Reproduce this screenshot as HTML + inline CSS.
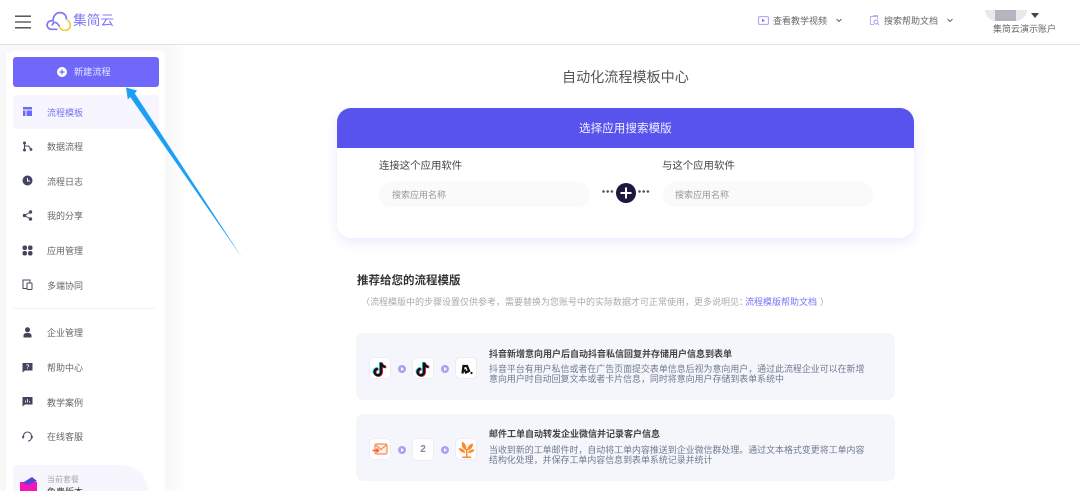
<!DOCTYPE html>
<html lang="zh">
<head>
<meta charset="utf-8">
<title>集简云</title>
<style>
*{box-sizing:border-box;margin:0;padding:0}
html,body{width:1080px;height:491px;overflow:hidden;background:#fff}
body{position:relative;font-family:"Liberation Sans","Noto Sans CJK SC",sans-serif;color:#555}
#wrap{position:absolute;left:0;top:0;width:1080px;height:491px;overflow:hidden;background:#fff;filter:blur(.3px)}
.a{position:absolute;white-space:nowrap}
#hd{left:0;top:0;width:1080px;height:45px;background:#fff;border-bottom:1px solid #e2e2e2}
#bgl{left:0;top:45px;width:6px;height:446px;background:#f8f8f8}
#bgr{left:165px;top:45px;width:22px;height:446px;background:linear-gradient(90deg,#f7f7f7,#fff)}
#bgt{left:0;top:45px;width:165px;height:8px;background:#f9f9f9}
#side{left:6px;top:51px;width:159px;height:440px;background:#fff;border-radius:9px 9px 0 0}
#new{left:13px;top:57px;width:146px;height:30px;background:#7068fb;border-radius:3px}
#act{left:13px;top:95px;width:146px;height:34px;background:#f7f6ff;border-radius:3px}
.m{left:47px;font-size:9px;line-height:12px;color:#66666e}
.i{left:22px;width:11px;height:11px;overflow:visible}
#card{left:337px;top:108px;width:577px;height:130px;background:#fff;border-radius:14px;box-shadow:0 4px 12px rgba(95,85,240,.13)}
#chead{left:337px;top:108px;width:577px;height:40px;background:#5953ed;border-radius:14px 14px 0 0}
.inp{top:182px;width:211px;height:25px;border-radius:13px;background:#fafafa;font-size:9px;line-height:26px;padding-left:13px;color:#999}
.lab{top:160px;font-size:10.400px;line-height:14px;color:#444}
.dots{top:190px;width:12px;height:3px;background:radial-gradient(circle at 1.500px 1.500px,#555 1.200px,transparent 1.400px) 0 0/4.200px 3px repeat-x}
.tc{left:356px;width:539px;height:67px;background:#f5f6fb;border-radius:7px}
.tt{left:489px;font-size:9px;font-weight:bold;line-height:12px;color:#444}
.td{left:489px;font-size:8.950px;line-height:10.200px;color:#6f7b90}
.box{width:22px;height:22px;background:#fff;border:1px solid #eceef3;border-radius:5px}
.box svg{display:block;width:20px;height:20px}
.pl{width:8px;height:8px;border-radius:50%;background:#a8a2f4}
.pl:after{content:"";position:absolute;left:3px;top:2px;border-left:3px solid #fff;border-top:2px solid transparent;border-bottom:2px solid transparent}
</style>
</head>
<body>
<div id="wrap">
<div class="a" id="hd"></div>
<div class="a" id="bgl"></div>
<div class="a" id="bgr"></div>
<div class="a" id="bgt"></div>
<div class="a" id="side"></div>

<svg class="a" style="left:15px;top:15px" width="17" height="14"><path d="M0 1.200H16M0 7H16M0 12.800H16" stroke="#444" stroke-width="1.300"/></svg>
<svg class="a" style="left:45px;top:11px" width="28" height="20" viewBox="0 0 28 20" fill="none"><path d="M22 9A5.500 5.500 0 1 1 14.500 15.500" stroke="#f5cd3a" stroke-width="1.700"/><path d="M12.500 18.300H6.500A4.300 4.300 0 1 1 8 10C8 5 11 1.600 15 1.600C19 1.600 21.500 4.500 21.500 8.500M7 14.500C9 9.500 12 11 14.500 15.500" stroke="#7f78f5" stroke-width="1.700"/></svg>
<div class="a" style="left:73px;top:11px;font-size:13.700px;line-height:20px;color:#7e78f7">集简云</div>

<svg class="a" style="left:758px;top:16px" width="11" height="9" viewBox="0 0 11 9" fill="none"><rect x=".6" y=".6" width="9.800" height="7.800" rx="1" stroke="#a59ff5" stroke-width="1"/><path d="M4 2.800V6.200L7 4.500Z" fill="#7f78f5"/></svg>
<div class="a" style="left:773px;top:15px;font-size:9px;line-height:12px;color:#666">查看教学视频</div>
<svg class="a" style="left:836px;top:18px" width="6" height="5" fill="none"><path d="M.5 1L3 3.500L5.500 1" stroke="#666"/></svg>
<svg class="a" style="left:869px;top:15px" width="11" height="11" viewBox="0 0 11 11" fill="none"><path d="M8 1.500H1.500V9.500H5" stroke="#b3aef6"/><path d="M4 .6H8.500V4" stroke="#b3aef6"/><circle cx="7" cy="7" r="2" stroke="#a59ff5"/><path d="M8.500 8.500L10 10" stroke="#a59ff5"/></svg>
<div class="a" style="left:884px;top:15px;font-size:9px;line-height:12px;color:#666">搜索帮助文档</div>
<svg class="a" style="left:947px;top:18px" width="6" height="5" fill="none"><path d="M.5 1L3 3.500L5.500 1" stroke="#666"/></svg>
<div class="a" style="left:985px;top:10px;width:42px;height:11px;background:#e9e9e9;border-radius:0 0 14px 14px"></div>
<div class="a" style="left:995px;top:10px;width:21px;height:11px;background:#b5b5c0"></div>
<div class="a" style="left:1031px;top:13px;width:0;height:0;border-left:4px solid transparent;border-right:4px solid transparent;border-top:5px solid #444"></div>
<div class="a" style="left:993px;top:23px;font-size:9px;line-height:12px;color:#666">集简云演示账户</div>

<div class="a" id="new"></div>
<svg class="a" style="left:57px;top:67px" width="10" height="10"><circle cx="5" cy="5" r="5" fill="#fff"/><path d="M2.500 5H7.500M5 2.500V7.500" stroke="#7068fb" stroke-width="1.200"/></svg>
<div class="a" style="left:74px;top:66px;font-size:9.200px;line-height:12px;color:#e6e4ff">新建流程</div>
<div class="a" id="act"></div>

<svg class="a i" style="top:106px" viewBox="0 0 11 11"><path d="M1 1H10V3.500H1ZM1 4.500H3.500V10H1ZM4.500 4.500H10V10H4.500Z" fill="#7068fb"/></svg>
<div class="a m" style="top:107px;color:#7a72f5">流程模板</div>
<svg class="a i" style="top:141px" viewBox="0 0 11 11" fill="none"><path d="M2.500 2V8.500M2.500 5H6.500L8.500 7.500" stroke="#4a4a5e" stroke-width="1.100"/><circle cx="2.500" cy="2" r="1.500" fill="#4a4a5e"/><circle cx="2.500" cy="9" r="1.500" fill="#4a4a5e"/><circle cx="9" cy="8.500" r="1.400" fill="#4a4a5e"/></svg>
<div class="a m" style="top:141px">数据流程</div>
<svg class="a i" style="top:175px" viewBox="0 0 11 11"><circle cx="5.500" cy="5.500" r="5" fill="#44446a"/><path d="M5.500 3V6H8" stroke="#fff" fill="none"/></svg>
<div class="a m" style="top:176px">流程日志</div>
<svg class="a i" style="top:210px" viewBox="0 0 11 11" fill="none"><path d="M8.500 2L2.500 5.500L8.500 9" stroke="#4a4a5e"/><circle cx="8.500" cy="2" r="1.700" fill="#4a4a5e"/><circle cx="2.500" cy="5.500" r="1.700" fill="#4a4a5e"/><circle cx="8.500" cy="9" r="1.700" fill="#4a4a5e"/></svg>
<div class="a m" style="top:210px">我的分享</div>
<svg class="a i" style="top:245px" viewBox="0 0 11 11" fill="#44445e"><rect x=".5" y=".5" width="4.500" height="4.500" rx="2"/><rect x="6" y=".5" width="4.500" height="4.500" rx="2"/><rect x=".5" y="6" width="4.500" height="4.500" rx="2"/><rect x="6" y="6" width="4.500" height="4.500" rx="2"/></svg>
<div class="a m" style="top:245px">应用管理</div>
<svg class="a i" style="top:279px" viewBox="0 0 11 11" fill="none" stroke="#4a4a5e"><path d="M5 9.500H1V1H8V3.500"/><rect x="5" y="4" width="5" height="6.500" rx=".6"/></svg>
<div class="a m" style="top:280px">多端协同</div>
<div class="a" style="left:13px;top:308px;width:142px;height:1px;background:#f1f1f4"></div>
<svg class="a i" style="top:327px" viewBox="0 0 11 11" fill="#44445e"><circle cx="5.500" cy="2.800" r="2.500"/><path d="M1.500 10.500V8.500C1.500 7 3 6 5 6H6C8 6 9.500 7 9.500 8.500V10.500Z"/></svg>
<div class="a m" style="top:327px">企业管理</div>
<svg class="a i" style="top:362px" viewBox="0 0 11 11"><path d="M.5 1H10.500V8.500H3L.5 10.500Z" fill="#44445e"/><path d="M4.200 3.300C4.500 2.400 6.800 2.500 6.800 3.800C6.800 4.700 5.500 4.700 5.500 5.600M5.500 6.300V7" stroke="#fff" fill="none" stroke-width=".8"/></svg>
<div class="a m" style="top:362px">帮助中心</div>
<svg class="a i" style="top:396px" viewBox="0 0 11 11"><path d="M.5 1H10.500V8.500H3L.5 10.500Z" fill="#44445e"/><path d="M3.500 4.500V6.500M5.500 3V6.500M7.500 5V6.500" stroke="#fff" fill="none" stroke-width=".8"/></svg>
<div class="a m" style="top:397px">教学案例</div>
<svg class="a i" style="top:431px" viewBox="0 0 11 11" fill="none"><path d="M1.500 6V5a4 4 0 0 1 8 0V6.500C9.500 8.500 8 10 6 10" stroke="#4a4a5e" stroke-width="1.100"/><rect x=".2" y="4.500" width="2" height="3" rx="1" fill="#4a4a5e"/><rect x="8.800" y="4.500" width="2" height="3" rx="1" fill="#4a4a5e"/></svg>
<div class="a m" style="top:431px">在线客服</div>

<div class="a" style="left:13px;top:465px;width:135px;height:26px;background:#f7f6ff;border-radius:9px 70px 0 0"></div>
<svg class="a" style="left:20px;top:477px" width="18" height="14" viewBox="0 0 18 14"><path d="M0 5H17V14H0Z" fill="#f316b5"/><path d="M3 5.500L12 0L17 4L8 8Z" fill="#5347d8"/></svg>
<div class="a" style="left:47px;top:474px;font-size:8px;line-height:11px;color:#aaa">当前套餐</div>
<div class="a" style="left:47px;top:486px;font-size:9px;line-height:12px;color:#444">免费版本</div>

<svg class="a" style="left:120px;top:80px;z-index:5" width="130" height="185" viewBox="120 80 130 185"><path d="M126 87.500L137 90.500L134.800 93.500L242.300 258L130.200 97L127.800 99.500Z" fill="#1ca0f7"/></svg>

<div class="a" style="left:562px;top:67px;font-size:14.100px;line-height:20px;color:#555">自动化流程模板中心</div>

<div class="a" id="card"></div>
<div class="a" id="chead"></div>
<div class="a" style="left:579px;top:120px;font-size:11.600px;line-height:17px;color:#f1f0ff">选择应用搜索模版</div>
<div class="a lab" style="left:379px">连接这个应用软件</div>
<div class="a lab" style="left:662px">与这个应用软件</div>
<div class="a inp" style="left:379px">搜索应用名称</div>
<div class="a inp" style="left:662px">搜索应用名称</div>
<div class="a dots" style="left:602px"></div>
<div class="a dots" style="left:638px"></div>
<svg class="a" style="left:616px;top:183px" width="20" height="20"><circle cx="10" cy="10" r="10" fill="#21163f"/><path d="M4.500 10H15.500M10 4.500V15.500" stroke="#fff" stroke-width="2"/></svg>

<div class="a" style="left:357px;top:273px;font-size:11.500px;font-weight:bold;line-height:16px;color:#333">推荐给您的流程模版</div>
<div class="a" style="left:361px;top:296px;font-size:9px;line-height:13px;color:#aaa">（流程模版中的步骤设置仅供参考，需要替换为您账号中的实际数据才可正常使用，更多说明见：</div>
<div class="a" style="left:745px;top:296px;font-size:9px;line-height:13px;color:#7a72f5">流程模版帮助文档</div>
<div class="a" style="left:820px;top:296px;font-size:9px;line-height:13px;color:#aaa">）</div>

<div class="a tc" style="top:333px"></div>
<div class="a box" style="left:369px;top:357px"><svg viewBox="0 0 20 20" fill="none"><path d="M11 4.500V14A3.200 3.200 0 1 1 7.800 10.800M11 4.500C11.300 7 13 8.500 15.500 8.800" stroke="#19e0e8" stroke-width="2.500" transform="translate(-.8 -.5)"/><path d="M11 4.500V14A3.200 3.200 0 1 1 7.800 10.800M11 4.500C11.300 7 13 8.500 15.500 8.800" stroke="#fe2c55" stroke-width="2.500" transform="translate(.8 .5)"/><path d="M11 4.500V14A3.200 3.200 0 1 1 7.800 10.800M11 4.500C11.300 7 13 8.500 15.500 8.800" stroke="#111" stroke-width="2.500"/></svg></div>
<div class="a pl" style="left:398px;top:365px"></div>
<div class="a box" style="left:412px;top:357px"><svg viewBox="0 0 20 20" fill="none"><path d="M11 4.500V14A3.200 3.200 0 1 1 7.800 10.800M11 4.500C11.300 7 13 8.500 15.500 8.800" stroke="#19e0e8" stroke-width="2.500" transform="translate(-.8 -.5)"/><path d="M11 4.500V14A3.200 3.200 0 1 1 7.800 10.800M11 4.500C11.300 7 13 8.500 15.500 8.800" stroke="#fe2c55" stroke-width="2.500" transform="translate(.8 .5)"/><path d="M11 4.500V14A3.200 3.200 0 1 1 7.800 10.800M11 4.500C11.300 7 13 8.500 15.500 8.800" stroke="#111" stroke-width="2.500"/></svg></div>
<div class="a pl" style="left:441px;top:365px"></div>
<div class="a box" style="left:455px;top:357px"><svg viewBox="0 0 20 20" fill="none"><path d="M6.500 15.500L7.500 8H11L13 13L10 14.500L8.500 11.500" stroke="#111" stroke-width="2.300"/><circle cx="15.500" cy="15" r="1.100" fill="#111"/></svg></div>
<div class="a tt" style="top:348px">抖音新增意向用户后自动抖音私信回复并存储用户信息到表单</div>
<div class="a td" style="top:364px">抖音平台有用户私信或者在广告页面提交表单信息后视为意向用户，通过此流程企业可以在新增<br>意向用户时自动回复文本或者卡片信息，同时将意向用户存储到表单系统中</div>

<div class="a tc" style="top:414px"></div>
<div class="a box" style="left:369px;top:438px"><svg viewBox="0 0 20 20" fill="none"><rect x="5" y="5" width="12" height="10" rx="1.500" fill="#fdeee6" stroke="#f98a5e" stroke-width="1.200"/><path d="M5.500 6L11 10.500L16.500 6" stroke="#f98a5e" stroke-width="1.200"/><path d="M2.500 11.500H8.500M6.500 9.500L8.500 11.500L6.500 13.500" stroke="#f4622e" stroke-width="1.500"/></svg></div>
<div class="a pl" style="left:398px;top:446px"></div>
<div class="a box" style="left:412px;top:438px;height:23px;font-size:10px;font-weight:bold;line-height:21px;text-align:center;color:#7d8aa5">2</div>
<div class="a pl" style="left:441px;top:446px"></div>
<div class="a box" style="left:455px;top:438px"><svg viewBox="1 1 16 16" fill="#fb8a2c"><path d="M9 10C6 9 5 6 6 3C8 4 10 7 9 10ZM10 10C10 7 12 5 14.500 4.500C15 7 13 10 10 10ZM8.500 12C6 12 4 11 3 8.500C5.500 8 8 9.500 8.500 12ZM10.500 12C11 10 13.500 9 16 9.500C15 11.500 13 12.500 10.500 12Z"/><path d="M9 9H10.200V15H13V16.200H6V15H9Z"/></svg></div>
<div class="a tt" style="top:428px">邮件工单自动转发企业微信并记录客户信息</div>
<div class="a td" style="top:445px">当收到新的工单邮件时，自动将工单内容推送到企业微信群处理。通过文本格式变更将工单内容<br>结构化处理，并保存工单内容信息到表单系统记录并统计</div>
</div>
</body>
</html>
